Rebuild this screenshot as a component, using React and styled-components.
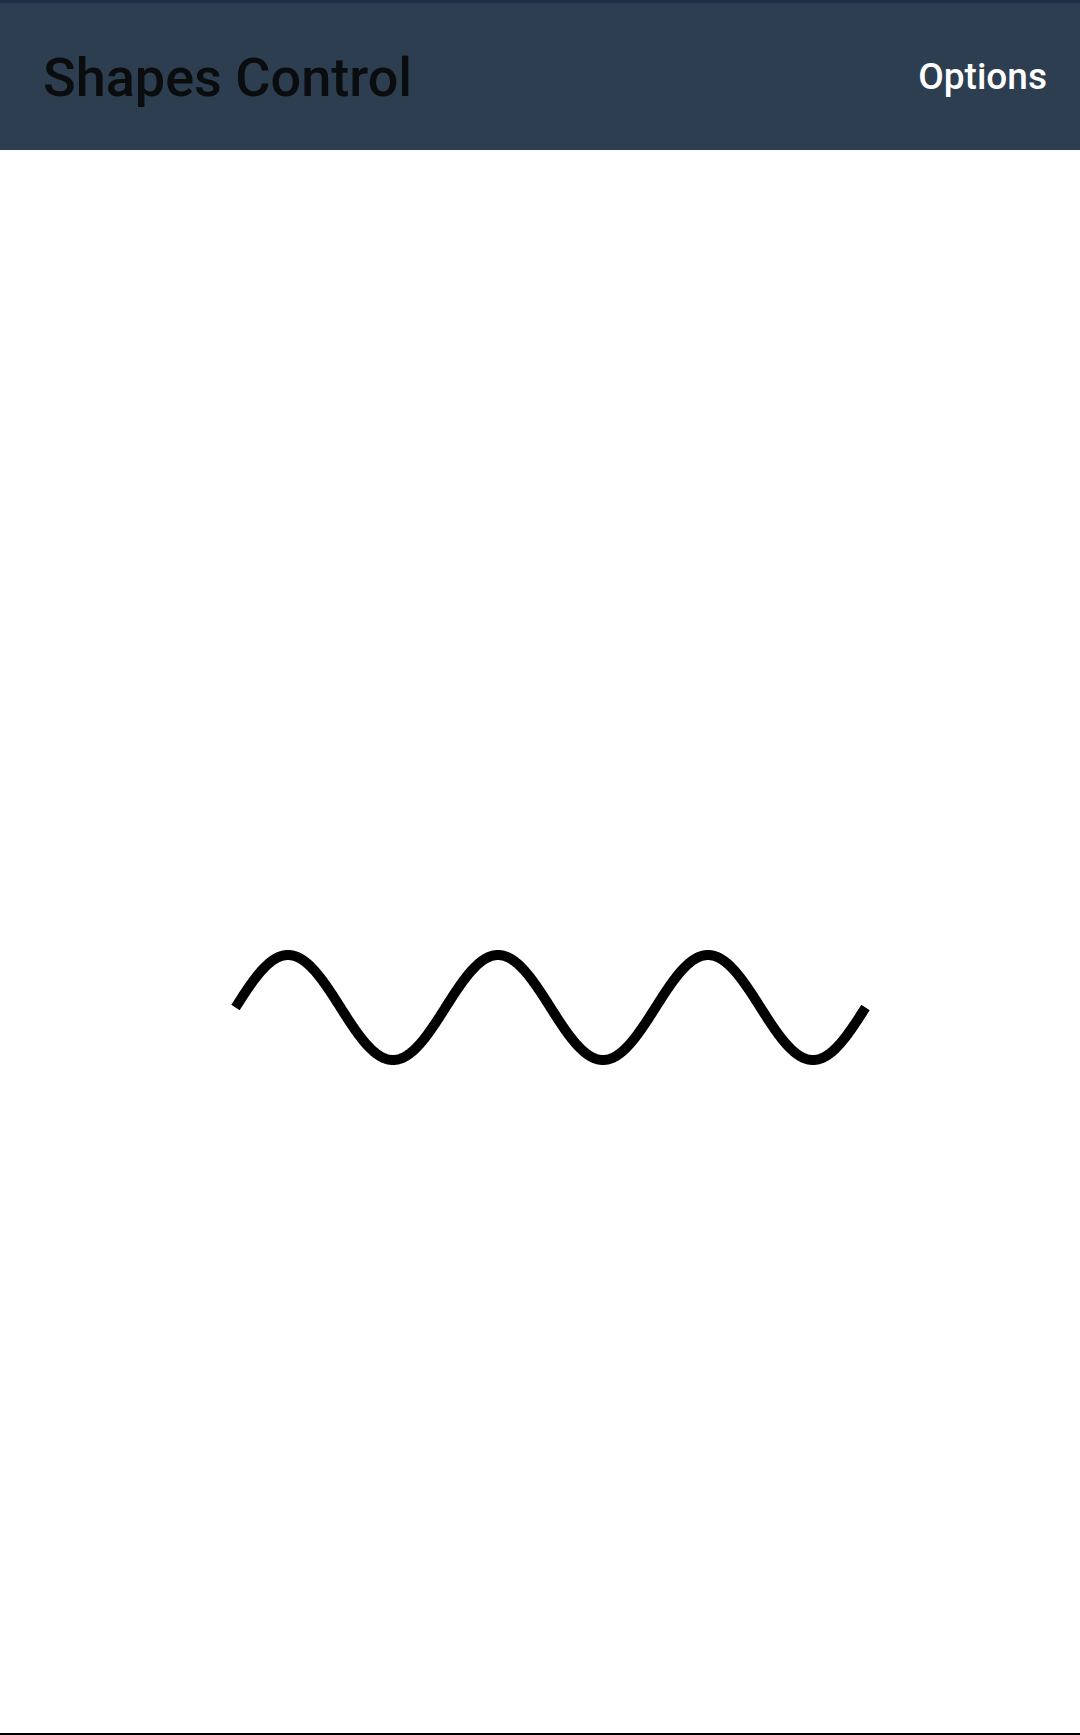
import React from "react";
import styled, { createGlobalStyle } from "styled-components";

const GlobalStyle = createGlobalStyle`
  html, body {
    margin: 0;
    padding: 0;
    background: #ffffff;
  }
  body {
    font-family: Roboto, "Noto Sans", "Liberation Sans", sans-serif;
  }
  * { box-sizing: border-box; }
`;

const Page = styled.div`
  display: flex;
  flex-direction: column;
  width: 1080px;
  height: 1735px;
  background: #ffffff;
`;

const Toolbar = styled.header`
  display: flex;
  align-items: center;
  justify-content: space-between;
  height: 150px;
  flex: 0 0 150px;
  padding: 0 33px 0 43px;
  background: #2c3e50;
  border-top: 3px solid #1c2f47;
`;

const Title = styled.h1`
  margin: 0;
  padding-top: 3px;
  font-family: Roboto, "Noto Sans", sans-serif;
  font-size: 54px;
  font-weight: 500;
  line-height: 1;
  color: #0a0c0e;
  letter-spacing: 0;
`;

const MenuItem = styled.button`
  margin: 0;
  padding: 0;
  border: none;
  background: transparent;
  font-family: Roboto, "Noto Sans", sans-serif;
  font-size: 37px;
  font-weight: 500;
  line-height: 1;
  color: #ffffff;
  cursor: pointer;
`;

const Canvas = styled.main`
  flex: 1 1 auto;
  position: relative;
  border-bottom: 2px solid #000000;
  overflow: hidden;
`;

const WaveSvg = styled.svg`
  display: block;
  width: 1080px;
  height: 1583px;
`;

function wavePoints() {
  const x0 = 235.5;
  const period = 210;
  const amp = 52.5;
  const cy = 1007.5 - 150;
  const pts = [];
  const n = 630;
  for (let i = 0; i <= n; i++) {
    const x = x0 + i;
    const y = cy - amp * Math.sin((2 * Math.PI * i) / period);
    pts.push(`${x.toFixed(2)},${y.toFixed(2)}`);
  }
  return pts.join(" ");
}

export default function App() {
  return (
    <>
      <GlobalStyle />
      <Page>
        <Toolbar>
          <Title>Shapes Control</Title>
          <MenuItem>Options</MenuItem>
        </Toolbar>
        <Canvas>
          <WaveSvg viewBox="0 0 1080 1583">
            <polyline
              points={wavePoints()}
              fill="none"
              stroke="#000000"
              strokeWidth="10"
              strokeLinecap="butt"
              strokeLinejoin="round"
            />
          </WaveSvg>
        </Canvas>
      </Page>
    </>
  );
}
